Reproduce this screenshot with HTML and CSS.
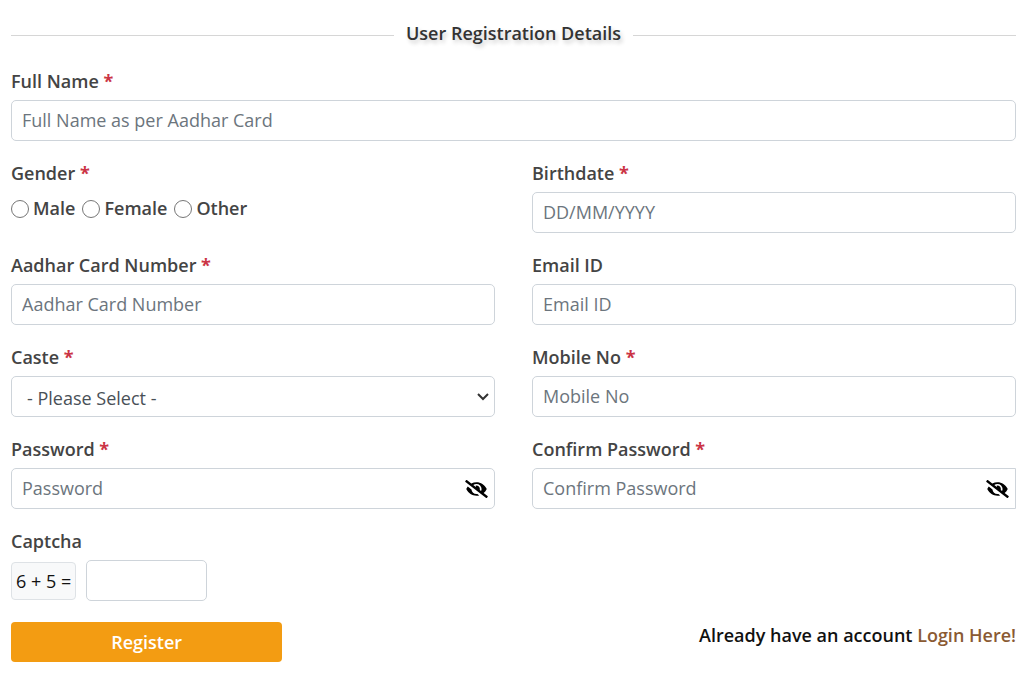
FILE: index.html
```html
<!DOCTYPE html>
<html lang="en">
<head>
    <meta charset="UTF-8">
    <meta name="viewport" content="width=device-width, initial-scale=1">
    <title>User Registration</title>
    <link rel="stylesheet" href="styles.css">
</head>
<body>
<svg class="sprite" aria-hidden="true">
    <symbol id="eyeSlash" viewBox="0 0 640 512">
        <path d="M320 400c-75.85 0-137.25-58.71-142.9-133.11L72.2 185.82c-13.79 17.3-26.48 35.59-36.72 55.59a32.35 32.35 0 0 0 0 29.19C89.71 376.41 197.07 448 320 448c26.91 0 52.87-4 77.89-10.46L346 397.39a144.13 144.13 0 0 1-26 2.61zm313.82 58.1l-110.55-85.44a331.25 331.25 0 0 0 81.25-102.07 32.35 32.35 0 0 0 0-29.19C550.29 135.59 442.93 64 320 64a308.15 308.15 0 0 0-147.32 37.7L45.46 3.37A16 16 0 0 0 23 6.18L3.37 31.45A16 16 0 0 0 6.18 53.9l588.36 454.73a16 16 0 0 0 22.46-2.81l19.64-25.27a16 16 0 0 0-2.82-22.45zm-183.72-142l-39.3-30.38A94.75 94.75 0 0 0 416 256a94.76 94.76 0 0 0-121.31-92.21A47.65 47.65 0 0 1 304 192a46.64 46.64 0 0 1-1.54 10l-73.61-56.89A142.31 142.31 0 0 1 320 112a143.92 143.92 0 0 1 144 144c0 21.63-5.29 41.79-13.9 60.11z"/>
    </symbol>
</svg>
<form class="register" id="registerForm">
    <h1 class="register_title"><span>User Registration Details</span></h1>
    <div class="register_grid">
        <div class="field field_full">
            <label class="field_label" for="fullName">Full Name <span class="required">*</span></label>
            <input class="field_input" type="text" id="fullName" placeholder="Full Name as per Aadhar Card">
        </div>
        <div class="field" role="radiogroup" aria-labelledby="genderLabel">
            <div class="field_label" id="genderLabel">Gender <span class="required">*</span></div>
            <div class="radio_list">
                <label class="radio"><input type="radio" name="gender" value="male">Male</label>
                <label class="radio"><input type="radio" name="gender" value="female">Female</label>
                <label class="radio"><input type="radio" name="gender" value="other">Other</label>
            </div>
        </div>
        <div class="field">
            <label class="field_label" for="birthdate">Birthdate <span class="required">*</span></label>
            <input class="field_input" type="text" id="birthdate" placeholder="DD/MM/YYYY">
        </div>
        <div class="field">
            <label class="field_label" for="aadhar">Aadhar Card Number <span class="required">*</span></label>
            <input class="field_input" type="text" id="aadhar" placeholder="Aadhar Card Number">
        </div>
        <div class="field">
            <label class="field_label" for="email">Email ID</label>
            <input class="field_input" type="email" id="email" placeholder="Email ID">
        </div>
        <div class="field">
            <label class="field_label" for="caste">Caste <span class="required">*</span></label>
            <div class="input_box">
                <select class="field_input field_select" id="caste">
                    <option>- Please Select -</option>
                </select>
                <svg class="select_arrow" viewBox="0 0 12 8" aria-hidden="true"><path d="M1 1l5 5 5-5"/></svg>
            </div>
        </div>
        <div class="field">
            <label class="field_label" for="mobile">Mobile No <span class="required">*</span></label>
            <input class="field_input" type="tel" id="mobile" placeholder="Mobile No">
        </div>
        <div class="field">
            <label class="field_label" for="password">Password <span class="required">*</span></label>
            <div class="input_box">
                <input class="field_input" type="password" id="password" placeholder="Password">
                <button class="password_toggle" type="button" aria-label="Show password"><svg><use href="#eyeSlash"/></svg></button>
            </div>
        </div>
        <div class="field">
            <label class="field_label" for="confirmPassword">Confirm Password <span class="required">*</span></label>
            <div class="input_box">
                <input class="field_input field_input_square" type="password" id="confirmPassword" placeholder="Confirm Password">
                <button class="password_toggle" type="button" aria-label="Show confirm password"><svg><use href="#eyeSlash"/></svg></button>
            </div>
        </div>
        <div class="field field_full">
            <label class="field_label" for="captcha">Captcha</label>
            <div class="captcha">
                <span class="captcha_sum">6 + 5 =</span>
                <input class="field_input captcha_input" type="text" id="captcha">
            </div>
        </div>
    </div>
    <div class="register_footer">
        <button class="btn_register" type="submit">Register</button>
        <p class="login">Already have an account <a href="#">Login Here!</a></p>
    </div>
</form>
<script>
    var toggles = document.querySelectorAll('.password_toggle');
    for (var i = 0; i < toggles.length; i++) {
        toggles[i].onclick = function () {
            var input = this.parentNode.querySelector('input');
            input.type = input.type === 'password' ? 'text' : 'password';
        };
    }
</script>
</body>
</html>
```
FILE: styles.css
```css
* {
    box-sizing: border-box;
}
body {
    margin: 0;
    background: #fff;
    color: #111;
    font-family: "Open Sans", "Liberation Sans", sans-serif;
    font-size: 18px;
    line-height: 24px;
}
button, input, select {
    font: inherit;
}
.sprite {
    display: none;
}
.register {
    padding: 21px 11px;
}
.register_title {
    display: flex;
    align-items: center;
    gap: 12px;
    margin: 0 0 24px;
    color: #333;
    font-size: 18px;
    font-weight: 600;
    text-shadow: 2px 3px 4px rgba(0, 0, 0, 0.2);
}
.register_title::before, .register_title::after {
    content: "";
    flex: 1;
    margin-top: 4px;
    border-top: 1px solid #d6d6d6;
}
.register_grid {
    display: grid;
    grid-template-columns: 1fr 1fr;
    gap: 20px 37px;
}
.field_full {
    grid-column: 1 / -1;
}
.field_label {
    display: block;
    margin-bottom: 7px;
    color: #444;
    font-weight: 600;
}
.required {
    color: #cb3445;
    font-weight: 700;
}
.field_input {
    display: block;
    width: 100%;
    height: 41px;
    padding: 0 10px 1px;
    border: 1px solid #ced4da;
    border-radius: 5px;
    background: #fff;
    color: #495057;
}
.field_input::placeholder {
    color: #6c757d;
    opacity: 1;
}
.input_box {
    position: relative;
}
.field_select {
    padding: 2px 24px 0 15px;
    appearance: none;
}
.select_arrow {
    position: absolute;
    top: 17px;
    right: 6px;
    width: 12px;
    height: 8px;
    fill: none;
    stroke: #333;
    stroke-width: 2;
    pointer-events: none;
}
.field_input_square {
    border-radius: 5px 0 0 5px;
}
.radio_list {
    display: flex;
    gap: 7px;
    padding-top: 4px;
}
.radio {
    display: flex;
    align-items: center;
    gap: 4px;
    color: #444;
    font-weight: 600;
}
.radio input {
    width: 18px;
    height: 18px;
    margin: 2px 0 0;
}
.password_toggle {
    position: absolute;
    top: 0;
    right: 7px;
    display: flex;
    align-items: center;
    height: 100%;
    padding: 0;
    border: 0;
    background: none;
    cursor: pointer;
}
.password_toggle svg {
    width: 23px;
    height: 18px;
    fill: #000;
}
.captcha {
    display: flex;
    align-items: center;
    gap: 10px;
}
.captcha_sum {
    padding: 6px 4px;
    border: 1px solid #dee2e6;
    border-radius: 4px;
    background: #f8f9fa;
}
.captcha_input {
    width: 12%;
}
.register_footer {
    display: flex;
    justify-content: space-between;
    align-items: flex-start;
    margin-top: 21px;
}
.btn_register {
    width: 27%;
    height: 40px;
    padding: 0;
    border: 0;
    border-radius: 4px;
    background: #f39c12;
    color: #fff;
    font-weight: 600;
    cursor: pointer;
}
.login {
    margin: 1px 0 0;
    font-weight: 600;
}
.login a {
    color: #8a5a33;
    text-decoration: none;
}
```
